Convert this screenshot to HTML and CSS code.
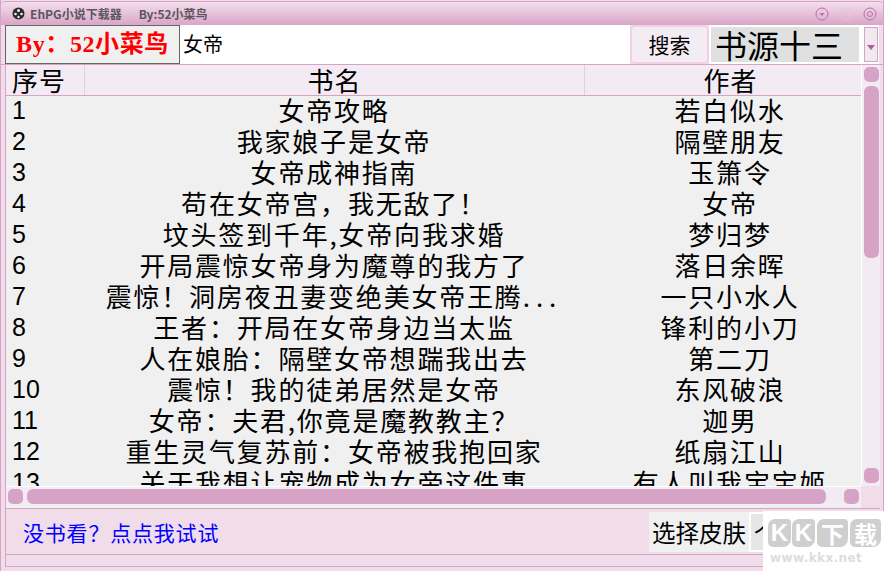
FILE: index.html
```html
<!DOCTYPE html>
<html lang="zh-CN">
<head>
  <meta charset="UTF-8" />
  <title>EhPG小说下载器</title>
  <link rel="stylesheet" href="styles.css">
</head>
<body>
  <div class="window">
    <div class="titlebar">
      <svg class="app-icon" width="13" height="13" viewBox="0 0 13 13">
        <circle cx="6.5" cy="6.5" r="6" fill="#2a2a2a"/>
        <circle cx="6.5" cy="3.5" r="1.5" fill="#eee"/>
        <circle cx="3.5" cy="7" r="1.3" fill="#eee"/>
        <circle cx="9.5" cy="7" r="1.3" fill="#eee"/>
        <circle cx="6.5" cy="10" r="1.2" fill="#eee"/>
      </svg>
      <span class="title-text">EhPG小说下载器</span>
      <span class="title-text title-by">By:52小菜鸟</span>
      <div class="win-btns">
        <svg width="14" height="14" viewBox="0 0 14 14"><circle cx="7" cy="7" r="6" fill="none" stroke="#b86fa5"/><path d="M4.5 6h5L7 9z" fill="#b86fa5"/></svg>
        <svg width="14" height="14" viewBox="0 0 14 14"><circle cx="7" cy="7" r="6" fill="none" stroke="#e6c3dc"/><path d="M7 4.5v5M4.500 7h5" stroke="#e6c3dc"/></svg>
        <svg width="14" height="14" viewBox="0 0 14 14"><circle cx="7" cy="7" r="6" fill="none" stroke="#b86fa5"/><circle cx="7" cy="7" r="2.500" fill="none" stroke="#b86fa5"/></svg>
      </div>
    </div>

    <div class="toolbar">
      <div class="by-label">By：52小菜鸟</div>
      <div class="search-input">女帝</div>
      <div class="search-btn">搜索</div>
      <div class="source-box">
        <div class="source-name">书源十三</div>
        <div class="source-arrow"></div>
      </div>
    </div>

    <div class="table-area">
      <div class="table-main">
        <div class="thead">
          <div class="th th-num">序号</div>
          <div class="th th-name">书名</div>
          <div class="th th-author">作者</div>
        </div>
        <div class="tbody">
          <div class="row"><div class="num">1</div><div>女帝攻略</div><div class="author">若白似水</div></div>
          <div class="row"><div class="num">2</div><div>我家娘子是女帝</div><div class="author">隔壁朋友</div></div>
          <div class="row"><div class="num">3</div><div>女帝成神指南</div><div class="author">玉箫令</div></div>
          <div class="row"><div class="num">4</div><div>苟在女帝宫，我无敌了！</div><div class="author">女帝</div></div>
          <div class="row"><div class="num">5</div><div>坟头签到千年,女帝向我求婚</div><div class="author">梦归梦</div></div>
          <div class="row"><div class="num">6</div><div>开局震惊女帝身为魔尊的我方了</div><div class="author">落日余晖</div></div>
          <div class="row"><div class="num">7</div><div>震惊！洞房夜丑妻变绝美女帝王腾<span class="dots">...</span></div><div class="author">一只小水人</div></div>
          <div class="row"><div class="num">8</div><div>王者：开局在女帝身边当太监</div><div class="author">锋利的小刀</div></div>
          <div class="row"><div class="num">9</div><div>人在娘胎：隔壁女帝想踹我出去</div><div class="author">第二刀</div></div>
          <div class="row"><div class="num">10</div><div>震惊！我的徒弟居然是女帝</div><div class="author">东风破浪</div></div>
          <div class="row"><div class="num">11</div><div>女帝：夫君,你竟是魔教教主？</div><div class="author">迦男</div></div>
          <div class="row"><div class="num">12</div><div>重生灵气复苏前：女帝被我抱回家</div><div class="author">纸扇江山</div></div>
          <div class="row"><div class="num">13</div><div>关于我想让宠物成为女帝这件事</div><div class="author">有人叫我宝宝姬</div></div>
        </div>
        <div class="hscroll">
          <div class="scroll-dot"></div>
          <div class="hthumb"></div>
          <div class="scroll-dot"></div>
        </div>
      </div>
      <div class="vscroll">
        <div class="scroll-dot"></div>
        <div class="vthumb"></div>
        <div class="scroll-dot"></div>
      </div>
    </div>

    <div class="footer">
      <a class="try-link">没书看？点点我试试</a>
      <div class="skin-label">选择皮肤</div>
      <div class="skin-box">个</div>
    </div>
    <div class="bottom-strip"></div>

    <div class="watermark">
      <div class="wm-logo">
        <span class="wm-blob">K</span>
        <span class="wm-blob">K</span>
        <span class="wm-blob wm-wide">下</span>
        <span class="wm-blob wm-wide">载</span>
      </div>
      <div class="wm-url">www.kkx.net</div>
    </div>
  </div>
</body>
</html>
```

FILE: styles.css
```css
/* RESET */
* { box-sizing: border-box; margin: 0; padding: 0; }
html, body { width: 100%; height: 100%; overflow: hidden; background: #fff; }
body { font-family: "Noto Sans CJK SC", "Liberation Sans", sans-serif; color: #000; }

/* WINDOW */
.window {
  position: relative;
  width: 884px;
  height: 571px;
  padding-top: 1px;
  display: flex;
  flex-direction: column;
  background: #f1dcea;
  border-left: 1px solid #d8a3c6;
  border-right: 1px solid #d8a3c6;
}

/* TITLE BAR */
.titlebar {
  height: 24px;
  display: flex;
  align-items: center;
  padding: 0 6px 0 11px;
  background: linear-gradient(to bottom, #f3dfec, #d9a5c7);
  border-top: 1px solid #d8a3c6;
  border-radius: 4px 4px 0 0;
  flex-shrink: 0;
}
.app-icon { margin-right: 5px; }
.title-text {
  font-family: "Noto Sans CJK SC", "Open Sans", sans-serif;
  font-size: 12px;
  font-weight: 700;
  color: #5e5560;
}
.title-by { margin-left: 17px; }
.win-btns { margin-left: auto; display: flex; gap: 10px; }

/* TOOLBAR */
.toolbar {
  height: 40px;
  display: flex;
  padding-left: 4px;
  flex-shrink: 0;
  background: #f1dcea;
  border-bottom: 1px solid #d8a3c6;
}
.by-label {
  width: 175px;
  flex-shrink: 0;
  border: 1px solid #666;
  background: #f0f0f0;
  color: #f00;
  font-family: "Liberation Serif", "Noto Sans CJK SC", serif;
  font-size: 24px;
  font-weight: 700;
  letter-spacing: 0.600px;
  line-height: 36px;
  text-align: center;
  white-space: nowrap;
}
.search-input {
  width: 450px;
  flex-shrink: 0;
  background: #fff;
  font-size: 20px;
  line-height: 38px;
  padding-left: 3px;
}
.search-btn {
  width: 79px;
  flex-shrink: 0;
  border: 2px solid #f3cfe6;
  border-radius: 5px;
  background: #f4ecf3;
  font-size: 21px;
  line-height: 34px;
  text-align: center;
}
.source-box {
  width: 170px;
  flex-shrink: 0;
  display: flex;
  padding: 2px 0 2px 2px;
  background: #fff;
  margin-right: 4px;
}
.source-name {
  width: 148px;
  background: #e0e0e0;
  font-size: 32px;
  line-height: 35px;
  padding-left: 4px;
  white-space: nowrap;
}
.source-arrow {
  width: 14px;
  margin-left: 5px;
  border: 1px solid #d8a3c6;
  background: #f1e8f0;
  position: relative;
}
.source-arrow::after {
  content: "";
  position: absolute;
  top: 17px;
  left: 2px;
  border-left: 4px solid transparent;
  border-right: 4px solid transparent;
  border-top: 5px solid #b45c9c;
}

/* TABLE */
.table-area {
  height: 444px;
  display: flex;
  margin: 0 3px 0 4px;
  flex-shrink: 0;
  border-bottom: 1px solid #d8a3c6;
  border-left: 1px solid #d8a3c6;
}
.table-main {
  width: 855px;
  flex-shrink: 0;
  display: flex;
  flex-direction: column;
  background: #f0f0f0;
}
.thead {
  height: 31px;
  display: grid;
  grid-template-columns: 78px 500px 276px;
  background: #f3ebf3;
  border-bottom: 1px solid #d8a3c6;
  flex-shrink: 0;
  overflow: hidden;
}
.th {
  font-size: 26px;
  line-height: 29px;
  letter-spacing: 1px;
  text-align: center;
  border-left: 1px solid #e3cfdf;
}
.th-num {
  border-left: 0;
  text-align: left;
  padding-left: 6px;
}
.th-author { padding-left: 16px; }
.tbody {
  height: 390px;
  overflow: hidden;
  flex-shrink: 0;
}
.row {
  height: 31px;
  display: grid;
  grid-template-columns: 78px 500px 276px;
  font-size: 26px;
  letter-spacing: 1.800px;
  line-height: 27px;
  text-align: center;
  white-space: nowrap;
}
.row .num {
  text-align: left;
  padding: 1px 0 0 6px;
  font-family: "Liberation Sans", sans-serif;
  font-size: 25px;
  letter-spacing: 0;
}
.row .author { padding-left: 16px; }
.dots { letter-spacing: 6px; }

/* SCROLLBARS */
.hscroll {
  height: 18px;
  display: flex;
  align-items: flex-start;
  gap: 4px;
  padding: 2px 2px 0;
  background: #f3ebf3;
  border-top: 1px solid #fff;
  flex-shrink: 0;
}
.scroll-dot {
  width: 15px;
  height: 15px;
  border-radius: 5px;
  background: #d6a2c5;
  flex-shrink: 0;
}
.hthumb {
  width: 800px;
  height: 15px;
  border-radius: 6px;
  background: #d6a2c5;
}
.hscroll .scroll-dot:last-child { margin-left: 14px; }
.vscroll {
  width: 19px;
  display: flex;
  flex-direction: column;
  align-items: center;
  gap: 4px;
  padding-top: 2px;
  background: #f3ebf3;
  border-left: 1px solid #fff;
  height: 421px;
}
.vthumb {
  width: 15px;
  height: 172px;
  border-radius: 6px;
  background: #d6a2c5;
}
.vscroll .scroll-dot:last-child { margin-top: auto; margin-bottom: 3px; }

/* FOOTER */
.footer {
  height: 45px;
  display: flex;
  align-items: center;
  margin: 0 4px;
  padding-left: 17px;
  border-left: 1px solid #d8a3c6;
  flex-shrink: 0;
}
.try-link { color: #00f; font-size: 21px; letter-spacing: 0.800px; white-space: nowrap; }
.skin-label {
  margin-left: auto;
  width: 100px;
  height: 40px;
  background: #f0f0f0;
  font-size: 23.500px;
  line-height: 40px;
  text-align: center;
  white-space: nowrap;
}
.skin-box {
  width: 130px;
  height: 40px;
  background: #e6e6e6;
  border: 2px solid #fff;
  font-size: 23px;
  line-height: 36px;
  padding-left: 3px;
  overflow: hidden;
}
.bottom-strip {
  flex: 1;
  margin: 0 4px 4px;
  border-top: 1px solid #d8a3c6;
  border-bottom: 1px solid #d8a3c6;
  border-left: 1px solid #d8a3c6;
}

/* WATERMARK */
.watermark {
  position: absolute;
  right: -1px;
  bottom: 0;
  width: 121px;
  height: 60px;
  padding: 8px 0 0 5px;
  background: #fff;
}
.wm-logo { display: flex; gap: 1px; }
.wm-blob {
  width: 23px;
  height: 28px;
  background: #cfcfcf;
  border-radius: 7px 4px 8px 5px;
  color: #fff;
  font-family: "Liberation Sans", sans-serif;
  font-size: 24px;
  font-weight: 700;
  line-height: 28px;
  text-align: center;
}
.wm-wide {
  width: 31px;
  margin-left: 1px;
  font-family: "Noto Sans CJK SC", sans-serif;
  font-size: 23px;
}
.wm-url {
  margin-top: 5px;
  padding-left: 2px;
  font-family: "DejaVu Sans", sans-serif;
  font-size: 12px;
  font-weight: 700;
  line-height: 12px;
  letter-spacing: 0.400px;
  color: #ddd;
  white-space: nowrap;
}
```
